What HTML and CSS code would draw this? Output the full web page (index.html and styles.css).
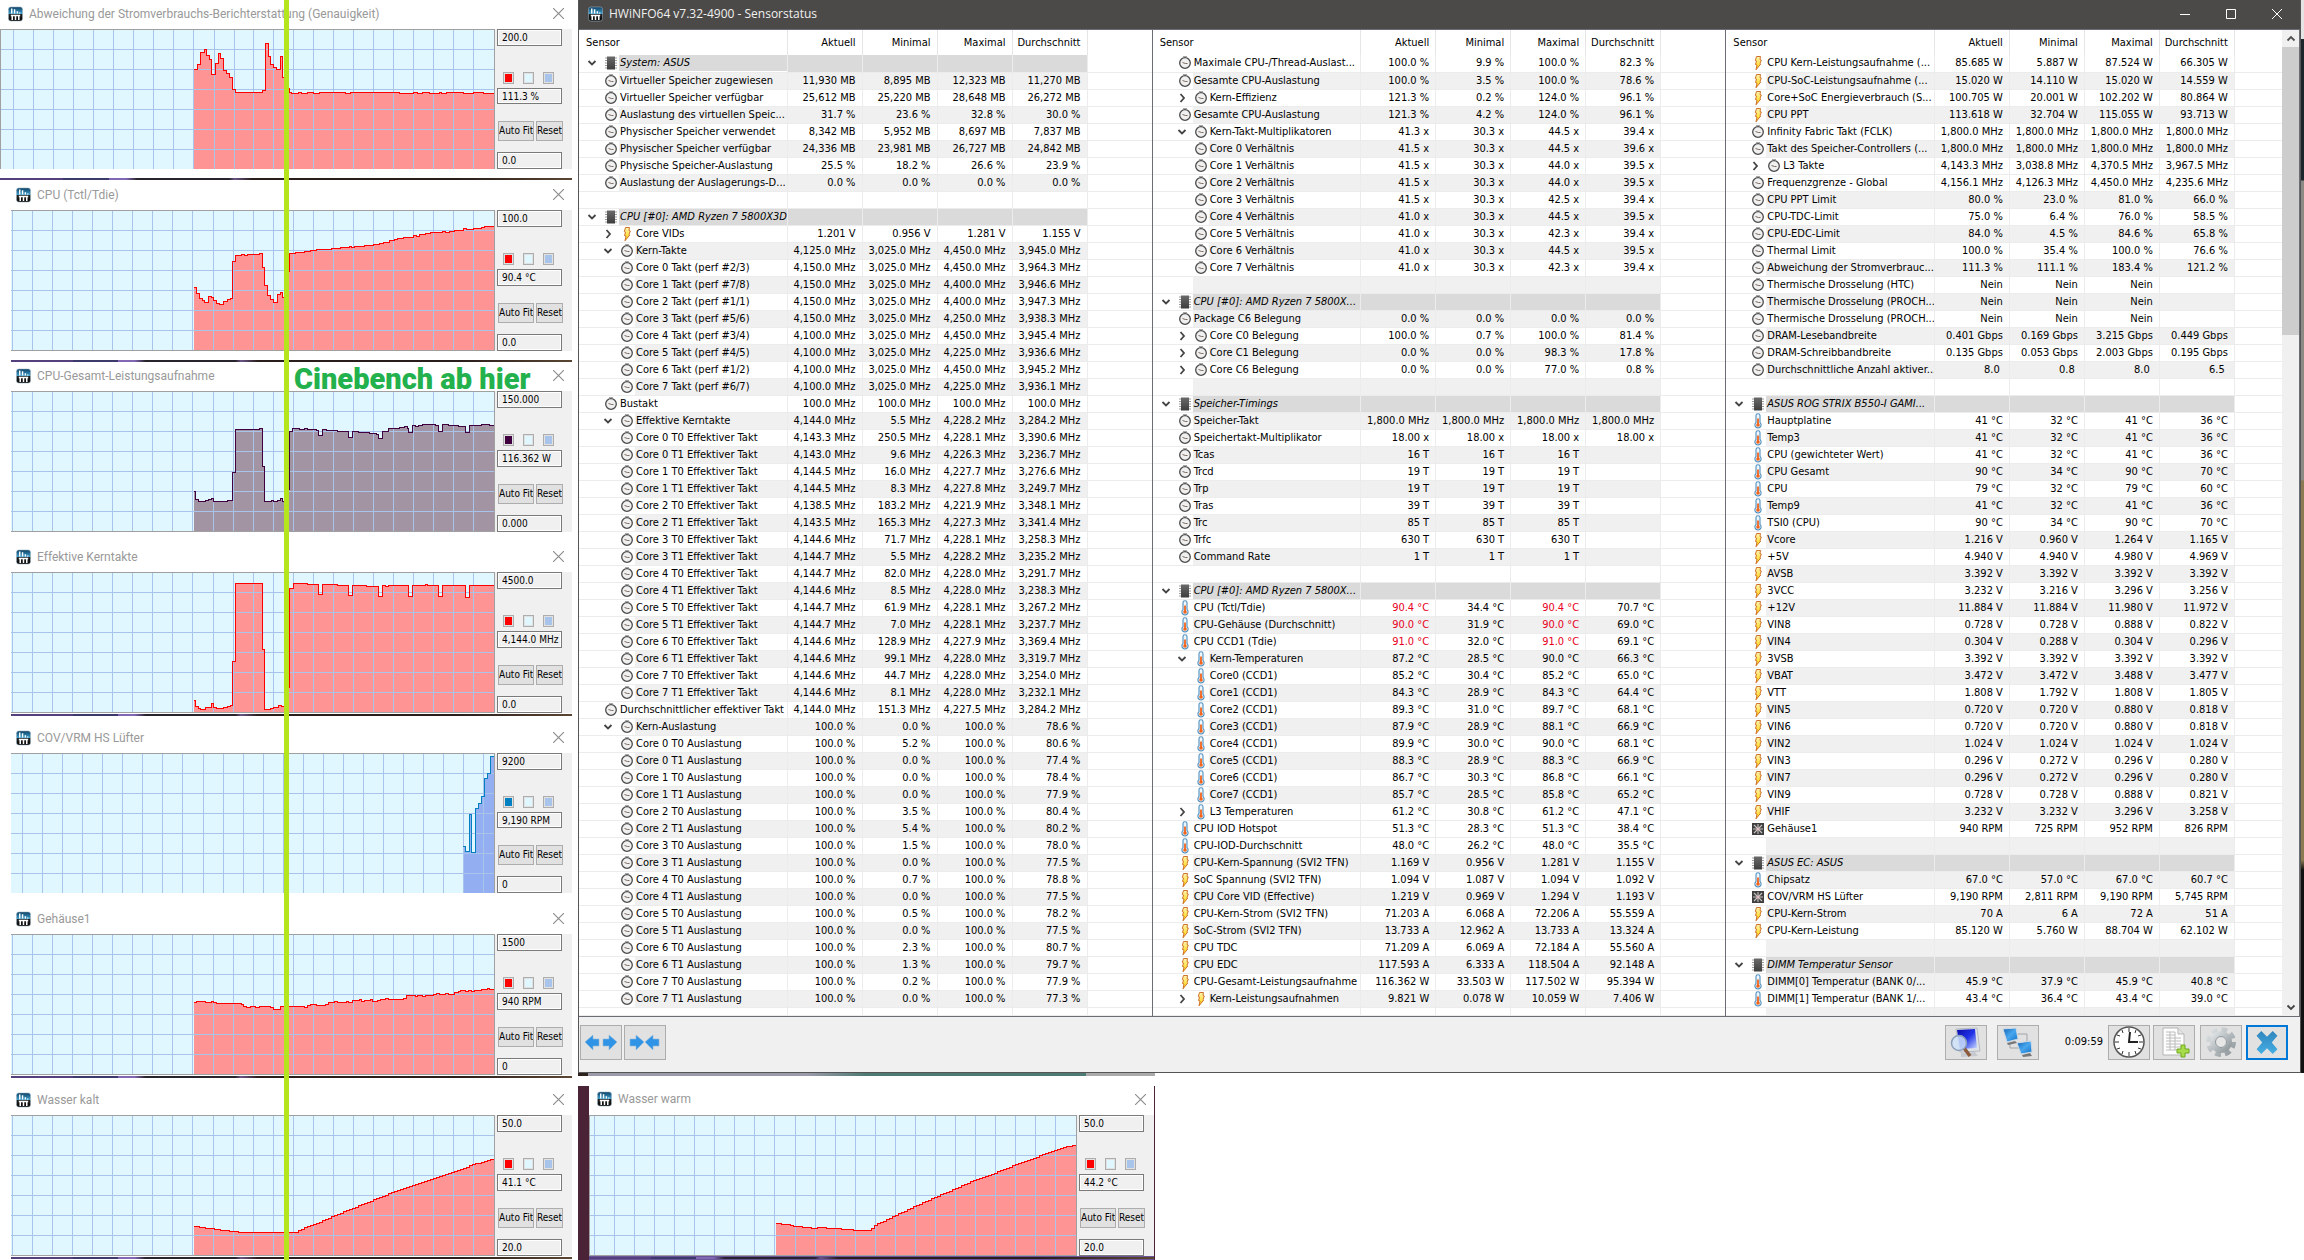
FILE: index.html
```html
<!DOCTYPE html>
<html lang="de">
<head>
<meta charset="utf-8">
<title>HWiNFO64 - Sensorstatus</title>
<link rel="stylesheet" href="styles.css">
</head>
<body>
<svg class="defs" aria-hidden="true">
  <defs>
    <linearGradient id="g-app" x1="0" y1="0" x2="0" y2="1"><stop offset="0" stop-color="#0d3f63"/><stop offset=".48" stop-color="#3f9fce"/><stop offset=".5" stop-color="#222"/><stop offset="1" stop-color="#050505"/></linearGradient>
    <linearGradient id="g-bolt" x1="0" y1="0" x2="0" y2="1"><stop offset="0" stop-color="#fff3b0"/><stop offset="1" stop-color="#ffd400"/></linearGradient>
    <linearGradient id="g-screen" x1="0" y1="0" x2="1" y2="1"><stop offset="0" stop-color="#0a0aa8"/><stop offset=".5" stop-color="#2233e8"/><stop offset="1" stop-color="#cfe0ff"/></linearGradient>
    <linearGradient id="g-pc" x1="0" y1="0" x2="1" y2="1"><stop offset="0" stop-color="#0f62b5"/><stop offset=".5" stop-color="#49a7ee"/><stop offset="1" stop-color="#1170c8"/></linearGradient>
    <linearGradient id="g-x" x1="0" y1="0" x2="0" y2="1"><stop offset="0" stop-color="#2f86bd"/><stop offset="1" stop-color="#45aee3"/></linearGradient>
    <linearGradient id="g-gear" x1="0" y1="0" x2="1" y2="1"><stop offset="0" stop-color="#dfe4e6"/><stop offset="1" stop-color="#8f979b"/></linearGradient>
    <linearGradient id="g-chip" x1="0" y1="0" x2="0" y2="1"><stop offset="0" stop-color="#6a6a6a"/><stop offset="1" stop-color="#3e3e3e"/></linearGradient>
  </defs>
  <symbol id="i-app" viewBox="0 0 16 16"><rect x=".5" y=".5" width="15" height="15" rx="2.5" fill="url(#g-app)" stroke="#9db4c2" stroke-width=".6"/><path d="M4 2v5.500M7 3v4.500M10 5v2.500M12.500 6.500v1" stroke="#fff" stroke-width="1.500"/><path d="M3 9.500h10M4.500 9.500v5M8 9.500v5M11.500 9.500v5" stroke="#fff" stroke-width="1.600"/></symbol>
  <symbol id="i-clock" viewBox="0 0 12 16"><circle cx="6" cy="8" r="5.300" fill="#f0f0f0" stroke="#4a4a4a" stroke-width="1.300"/><path d="M3.500 7.500 6.500 8.500h2" fill="none" stroke="#6e5a50" stroke-width=".9"/><path d="M4 1.500h4" stroke="#a8a8a8"/></symbol>
  <symbol id="i-chip" viewBox="0 0 12 16"><path d="M0 3h12M0 5.500h12M0 8h12M0 10.500h12M0 13h12" stroke="#9a9a9a"/><rect x="2" y="1.500" width="8" height="13" fill="url(#g-chip)"/></symbol>
  <symbol id="i-bolt" viewBox="0 0 12 16"><path d="M4.500 1.500H8.500L8 4.500 9.300 5 8 8.500 8.700 9 4 14.800 5 10 3.500 9.500 4.500 6 3.300 5.500Z" fill="url(#g-bolt)" stroke="#c8641c" stroke-width=".9"/></symbol>
  <symbol id="i-temp" viewBox="0 0 12 16"><path d="M4 2.500a2 1.700 0 0 1 4 0V9.500a3.100 3.100 0 1 1-4 0Z" fill="#eef7fd" stroke="#4f90bf" stroke-width="1.100"/><path d="M6 5.500v6.500" stroke="#f0641e" stroke-width="1.800"/><circle cx="6" cy="12" r="1.800" fill="#f0641e"/></symbol>
  <symbol id="i-fan" viewBox="0 0 12 16"><rect x="0" y="2" width="12" height="12" fill="#3f3f3f"/><path d="M6 3v4M6 9v4M1 8h4M7 8h4M2 4l3 3M7 9l3 3M10 4 7 7M5 9l-3 3" stroke="#c9c2c2" stroke-width="1.100"/><circle cx="6" cy="8" r="1.300" fill="#e7b9c0"/></symbol>
  <symbol id="i-open" viewBox="0 0 10 10"><path d="M1.500 3 5 6.500 8.500 3" fill="none" stroke="#444" stroke-width="1.800"/></symbol>
  <symbol id="i-shut" viewBox="0 0 10 10"><path d="M3.500 1 7 5 3.500 9" fill="none" stroke="#444" stroke-width="1.800"/></symbol>
  <symbol id="i-up" viewBox="0 0 10 10"><path d="M1.500 7 5 3.500 8.500 7" fill="none" stroke="#505050" stroke-width="1.800"/></symbol>
  <symbol id="i-x" viewBox="0 0 10 10"><path d="M0 0 10 10M10 0 0 10" fill="none" stroke="currentColor"/></symbol>
</svg>

<div class="desktop">
  <div class="graphs" id="graphs">
    <div class="marker"></div>
    <p class="note">Cinebench ab hier</p>
  </div>

  <div class="right">
    <div class="stage">
      <section class="main-window">
        <header class="titlebar">
          <svg class="app-icon"><use href="#i-app"/></svg>
          <h1 class="title">HWiNFO64 v7.32-4900 - Sensorstatus</h1>
          <button class="sys" aria-label="Minimieren"><svg viewBox="0 0 10 10"><path d="M0 5.500h10" stroke="currentColor"/></svg></button>
          <button class="sys" aria-label="Maximieren"><svg viewBox="0 0 10 10"><path d="M.5 .5h9v9h-9Z" fill="none" stroke="currentColor"/></svg></button>
          <button class="sys" aria-label="Schließen"><svg><use href="#i-x"/></svg></button>
        </header>
        <div class="panels">
          <div class="panel"><table class="sensors" id="t1"></table></div>
          <div class="panel"><table class="sensors" id="t2"></table></div>
          <div class="panel panel-last"><table class="sensors" id="t3"></table>
            <div class="scrollbar"><svg class="arrow"><use href="#i-up"/></svg><div class="thumb"></div><svg class="arrow arrow-end"><use href="#i-open"/></svg></div>
          </div>
        </div>
        <footer class="toolbar">
          <button class="tool" aria-label="Spalten verbreitern"><svg viewBox="0 0 40 32"><path d="M4 16l8-7v4h6v7h-6v4ZM36 16l-8-7v4h-6v7h6v4Z" fill="#2f93e6" stroke="#8fb8da" stroke-width=".6"/></svg></button>
          <button class="tool" aria-label="Spalten verkleinern"><svg viewBox="0 0 40 32"><path d="M19 16l-8-7v4H5v7h6v4ZM20 16l8-7v4h6v7h-6v4Z" fill="#2f93e6" stroke="#8fb8da" stroke-width=".6"/></svg></button>
          <span class="spacer"></span>
          <button class="tool tool-search" aria-label="Sensoren suchen"><svg viewBox="0 0 40 32"><path d="M10 3l21-1 3 23-20 1Z" fill="#dfe3e8" stroke="#b5bac0"/><path d="M11 4l18-1 2 19-17 1Z" fill="url(#g-screen)"/><path d="M15 27l14-1 3 4-17 1Z" fill="#c6cad0"/><path d="M18 22l6 8" stroke="#8c5a3c" stroke-width="3.500"/><circle cx="13" cy="17" r="7.500" fill="#cfe3f8" fill-opacity=".85" stroke="#8ba0b8" stroke-width="1.500"/></svg></button>
          <button class="tool tool-net" aria-label="Remote"><svg viewBox="0 0 40 32"><path d="M20 8h9v8M12 17v5h9" fill="none" stroke="#a0a4a8"/><path d="M5 3l13-1 2 11-11 3Z" fill="url(#g-pc)" stroke="#cdd9e4"/><path d="M9 17l8-2 2 2-9 2Z" fill="#777"/><path d="M19 17l14-2 1 11-11 2Z" fill="url(#g-pc)" stroke="#cdd9e4"/><path d="M24 29l8-2 2 3-9 1Z" fill="#777"/></svg></button>
          <time class="elapsed">0:09:59</time>
          <button class="tool" aria-label="Zeit zurücksetzen"><svg viewBox="0 0 40 32"><circle cx="20" cy="16" r="15" fill="#fff" stroke="#555" stroke-width="1.500"/><path d="M20 2v4M20 26v4M6 16h4M30 16h4M13 4l1 3M27 4l-1 3M13 28l1-3M27 28l-1-3M8 9l3 1M32 9l-3 1M8 23l3-1M32 23l-3-1" stroke="#333"/><path d="M21 6l-1 10h9" fill="none" stroke="#222" stroke-width="2"/></svg></button>
          <button class="tool tool-log" aria-label="Protokoll starten"><svg viewBox="0 0 40 32"><path d="M9 2h15l6 6v21H9Z" fill="#fdfdfd" stroke="#b5b5b5"/><path d="M24 2v6h6" fill="#e6e6e6" stroke="#b5b5b5"/><path d="M12 6h9M12 9h9M12 12h15M12 15h15M12 18h15M12 21h15M12 24h12M16 6v18M21 6v18" stroke="#bcbcbc"/><path d="M27 19h4v4h4v4h-4v4h-4v-4h-4v-4h4Z" fill="#a8dc4a" stroke="#6fa81e"/></svg></button>
          <button class="tool tool-gear" aria-label="Einstellungen"><svg viewBox="0 0 40 32"><circle cx="20" cy="16" r="12.500" fill="none" stroke="url(#g-gear)" stroke-width="5" stroke-dasharray="5.800 4"/><circle cx="20" cy="16" r="8.500" fill="#d5dadc" stroke="url(#g-gear)" stroke-width="5"/><circle cx="20" cy="16" r="5.500" fill="#e6e6e6" stroke="#8f979b"/></svg></button>
          <button class="tool tool-close" aria-label="Schließen"><svg viewBox="0 0 40 32"><path d="M9 9l5-5 6 6 6-6 5 5-6 7 6 7-5 5-6-6-6 6-5-5 6-7Z" fill="url(#g-x)"/></svg></button>
        </footer>
      </section>
      <div class="backdrop-edge"></div>
    </div>
    <div class="under-strip"></div>
    <div class="warm-slot" id="warm"></div>
  </div>
</div>
<script src="app.js"></script>
</body>
</html>
```
FILE: styles.css
```css
* { box-sizing: border-box; }

body {
  margin: 0;
  background: #fff;
  color: #000;
  font: 11px/16px "DejaVu Sans Condensed", "DejaVu Sans", "Noto Sans", sans-serif;
}

button, input { font: inherit; color: inherit; margin: 0; padding: 0; border-radius: 0; }

.defs { position: absolute; width: 0; height: 0; }

.desktop {
  display: grid;
  grid-template-columns: minmax(0, 578fr) minmax(0, 1726fr);
  height: 100vh;
  min-height: 1260px;
  overflow: hidden;
}

/* graph windows */
.graphs { position: relative; padding-right: 6px; }

.graph { margin-left: 11px; height: 181px; background: #fff; }
.graph-wide { margin-left: 0; }

.graph-title { display: flex; align-items: center; height: 29px; padding: 0 8px 2px 5px; gap: 6px; }
.graph-wide .graph-title, .warm-slot .graph-title { padding-left: 8px; }
.graph-title h2 { flex: 1; margin: 0; font: 12px/16px Roboto, "Noto Sans", sans-serif; color: #999; white-space: nowrap; }

.app-icon { width: 15px; height: 16px; flex: none; }
.close { width: 11px; height: 11px; border: 0; background: none; color: #8a8a8a; display: flex; }
.close svg { width: 11px; height: 11px; }

.graph-body { display: flex; height: 141px; background: #f0f0f0; overflow: hidden; }
.clipped .graph-body { height: 140px; }
.plot { flex: 1; min-width: 0; width: 0; height: 141px; border: solid #a0a0a0; border-width: 1px 1px 1px 0; background: #e0f7ff; shape-rendering: crispEdges; }
.graph-wide .plot, .warm-slot .plot { border-left-width: 1px; }
.grid-lines { stroke: #a9c4ea; fill: none; vector-effect: non-scaling-stroke; }
.trace { fill: none; vector-effect: non-scaling-stroke; }

.side { display: flex; flex-direction: column; width: 77px; padding: 0 9px 0 2px; font-size: 10px; }
.field { width: 65px; height: 17px; padding: 0 0 0 4px; border: 1px solid #7a7a7a; background: #f0f0f0; box-shadow: inset 0 0 0 1px #fff; }
.swatches { display: flex; gap: 9px; margin: 26px 0 4px 6px; }
.swatch { width: 11px; height: 12px; border: 1px solid #adadad; outline: 1px solid #e1e1e1; outline-offset: -2px; }
.swatch-back { background: #e0f7ff; }
.swatch-grid { background: #a9c4ea; }
.actions { display: flex; gap: 2px; margin: 17px 0 11px 1px; }
.action { height: 20px; border: 1px solid #adadad; background: #e1e1e1; overflow: hidden; white-space: nowrap; }
.action-fit { width: 36px; flex: none; }
.action-reset { width: 27px; flex: none; }

.gap { display: flex; flex-direction: column; height: 11px; padding: 1px 0; }
.gap::before { content: ""; height: 2px; }
.gap-low { justify-content: flex-end; padding-bottom: 0; }
.gap-low::before, .gap-high::before {
  background: linear-gradient(90deg, #54407c 0 11%, #3c3a6a 11% 19%, #8268b4 19% 22%, #28242c 24% 40%, #6a5486 41%, #2a1e1c 44% 80%, #5a4632);
}

.marker { position: absolute; z-index: 2; top: 0; bottom: 0; left: 284px; width: 5px; background: #b5e61d; }
.note {
  position: absolute; z-index: 2; left: 294px; top: 361px; margin: 0;
  font: 900 29px/36px Roboto, "Open Sans", sans-serif;
  color: #22b14c; white-space: nowrap;
}

/* main sensor window */
.right { display: flex; flex-direction: column; min-width: 0; }
.stage { display: flex; }
.main-window { flex: 1; min-width: 0; border: solid #555; border-width: 0 1px 1px; background: #f0f0f0; }
.backdrop-edge { width: 3px; background: linear-gradient(#e4e4e4 0 39px, #1c262b 39px 180px, #8d8a86 181px 480px, #8c7a52 481px 860px, #111 870px); }

.titlebar { display: flex; align-items: center; height: 29px; padding: 0 0 2px 9px; background: #4c4a48; color: #f0f0f0; }
.title { flex: 1; margin: 0 0 0 6px; font: 12px/16px "Open Sans", "Noto Sans", sans-serif; }
.sys { width: 46px; height: 27px; border: 0; background: none; color: #fff; }
.sys svg { display: block; width: 10px; height: 10px; margin: 0 auto; }

.panels { display: flex; }
.panel { flex: 1; min-width: 0; border: solid #6a6d73; border-width: 1px 1px 1px 0; background: #fff; }
.panel-last { display: flex; }

.sensors { width: 100%; table-layout: fixed; border-collapse: collapse; }
.panel-last .sensors { flex: 1; }
.sensors th, .sensors td { padding: 0; font-weight: normal; text-align: right; white-space: nowrap; overflow: hidden; }
.sensors thead th { height: 25px; padding-right: 6px; border-right: 1px solid #e5e5e5; }
.sensors thead th:first-child { text-align: left; padding-left: 7px; }
.sensors thead th:last-child { border-right: 0; }
.sensors tbody tr { height: 17px; }
.sensors tbody td { padding-right: 6px; border: solid #ececec; border-width: 0 1px 1px 0; }
.sensors tbody th { border: solid #ececec; border-width: 0 1px 1px 0; }
.sensors tbody td:last-child { border-right: 0; background: #fff; }
.col-value { width: 75px; }
.col-name { width: 208px; }

.cell { display: flex; height: 16px; text-align: left; }
.lead { display: flex; align-items: center; justify-content: flex-end; flex: none; width: 40px; padding-right: 2px; gap: 8px; background: #fff; }
.lead-2 { width: 56px; }
.lead svg { width: 12px; height: 16px; flex: none; }
.lead .chev { width: 10px; height: 10px; }
.name { flex: 1; padding-left: 1px; overflow: hidden; }
.stripe td, .stripe .name { background: #f0f0f0; }
.stripe td, .stripe th { border-right-color: #f8f8f8; }
.group td, .group .name { background: #dadada; }
.group .name { font-style: italic; }
.sensors tbody tr.rest { height: 8px; }
.rest .cell { height: 7px; }
.hot { color: #e8001c; }

.scrollbar { display: flex; flex-direction: column; align-items: center; width: 17px; background: #f0f0f0; }
.arrow { width: 10px; height: 17px; flex: none; }
.thumb { width: 100%; height: 288px; background: #cdcdcd; }
.arrow-end { margin-top: auto; }

.toolbar { display: flex; align-items: center; height: 55px; padding: 0 12px 4px 1px; gap: 2px; }
.tool { width: 42px; height: 35px; border: 1px solid #adadad; background: #e1e1e1; display: flex; align-items: center; justify-content: center; }
.tool svg { width: 40px; height: 32px; }
.spacer { flex: 1; }
.tool-net { margin-left: 8px; }
.elapsed { margin: 0 3px 0 24px; }
.tool-log { margin-left: 1px; }
.tool-gear { margin-left: 3px; }
.tool-close { margin-left: 2px; border: 2px solid #0078d7; }
.tool-close svg { width: 38px; height: 31px; }

.under-strip { width: 577px; height: 3px; margin-bottom: 10px; background: linear-gradient(90deg, #2c211c 0 10px, #9a9aa8 10px 40%, #4d7a72 50% 88%, #aaa 88%); }
.warm-slot { flex: 1; width: 577px; padding: 0 1px 0 11px; background: #4a2336; }
.warm-slot .graph { margin-left: 0; height: auto; }
.warm-slot .gap { height: 4px; padding: 1px 0 0; background: #6a559a; }
```
FILE: app.js
```javascript
/* Each line: icon, indent level, tree state, name, then four values.
   h = group, c = clock, b = voltage/power, t = temperature, f = fan, _ = empty */
const panels = [
`h1vSystem: ASUS
c1-Virtueller Speicher zugewiesen|11,930 MB|8,895 MB|12,323 MB|11,270 MB
c1-Virtueller Speicher verfügbar|25,612 MB|25,220 MB|28,648 MB|26,272 MB
c1-Auslastung des virtuellen Speic...|31.7 %|23.6 %|32.8 %|30.0 %
c1-Physischer Speicher verwendet|8,342 MB|5,952 MB|8,697 MB|7,837 MB
c1-Physischer Speicher verfügbar|24,336 MB|23,981 MB|26,727 MB|24,842 MB
c1-Physische Speicher-Auslastung|25.5 %|18.2 %|26.6 %|23.9 %
c1-Auslastung der Auslagerungs-D...|0.0 %|0.0 %|0.0 %|0.0 %
_1-
h1vCPU [#0]: AMD Ryzen 7 5800X3D
b2>Core VIDs|1.201 V|0.956 V|1.281 V|1.155 V
c2vKern-Takte|4,125.0 MHz|3,025.0 MHz|4,450.0 MHz|3,945.0 MHz
c2-Core 0 Takt (perf #2/3)|4,150.0 MHz|3,025.0 MHz|4,450.0 MHz|3,964.3 MHz
c2-Core 1 Takt (perf #7/8)|4,150.0 MHz|3,025.0 MHz|4,400.0 MHz|3,946.6 MHz
c2-Core 2 Takt (perf #1/1)|4,150.0 MHz|3,025.0 MHz|4,400.0 MHz|3,947.3 MHz
c2-Core 3 Takt (perf #5/6)|4,150.0 MHz|3,025.0 MHz|4,250.0 MHz|3,938.3 MHz
c2-Core 4 Takt (perf #3/4)|4,100.0 MHz|3,025.0 MHz|4,450.0 MHz|3,945.4 MHz
c2-Core 5 Takt (perf #4/5)|4,100.0 MHz|3,025.0 MHz|4,225.0 MHz|3,936.6 MHz
c2-Core 6 Takt (perf #1/2)|4,100.0 MHz|3,025.0 MHz|4,450.0 MHz|3,945.2 MHz
c2-Core 7 Takt (perf #6/7)|4,100.0 MHz|3,025.0 MHz|4,225.0 MHz|3,936.1 MHz
c1-Bustakt|100.0 MHz|100.0 MHz|100.0 MHz|100.0 MHz
c2vEffektive Kerntakte|4,144.0 MHz|5.5 MHz|4,228.2 MHz|3,284.2 MHz
c2-Core 0 T0 Effektiver Takt|4,143.3 MHz|250.5 MHz|4,228.1 MHz|3,390.6 MHz
c2-Core 0 T1 Effektiver Takt|4,143.0 MHz|9.6 MHz|4,226.3 MHz|3,236.7 MHz
c2-Core 1 T0 Effektiver Takt|4,144.5 MHz|16.0 MHz|4,227.7 MHz|3,276.6 MHz
c2-Core 1 T1 Effektiver Takt|4,144.5 MHz|8.3 MHz|4,227.8 MHz|3,249.7 MHz
c2-Core 2 T0 Effektiver Takt|4,138.5 MHz|183.2 MHz|4,221.9 MHz|3,348.1 MHz
c2-Core 2 T1 Effektiver Takt|4,143.5 MHz|165.3 MHz|4,227.3 MHz|3,341.4 MHz
c2-Core 3 T0 Effektiver Takt|4,144.6 MHz|71.7 MHz|4,228.1 MHz|3,258.3 MHz
c2-Core 3 T1 Effektiver Takt|4,144.7 MHz|5.5 MHz|4,228.2 MHz|3,235.2 MHz
c2-Core 4 T0 Effektiver Takt|4,144.7 MHz|82.0 MHz|4,228.0 MHz|3,291.7 MHz
c2-Core 4 T1 Effektiver Takt|4,144.6 MHz|8.5 MHz|4,228.0 MHz|3,238.3 MHz
c2-Core 5 T0 Effektiver Takt|4,144.7 MHz|61.9 MHz|4,228.1 MHz|3,267.2 MHz
c2-Core 5 T1 Effektiver Takt|4,144.7 MHz|7.0 MHz|4,228.1 MHz|3,237.7 MHz
c2-Core 6 T0 Effektiver Takt|4,144.6 MHz|128.9 MHz|4,227.9 MHz|3,369.4 MHz
c2-Core 6 T1 Effektiver Takt|4,144.6 MHz|99.1 MHz|4,228.0 MHz|3,319.7 MHz
c2-Core 7 T0 Effektiver Takt|4,144.6 MHz|44.7 MHz|4,228.0 MHz|3,254.0 MHz
c2-Core 7 T1 Effektiver Takt|4,144.6 MHz|8.1 MHz|4,228.0 MHz|3,232.1 MHz
c1-Durchschnittlicher effektiver Takt|4,144.0 MHz|151.3 MHz|4,227.5 MHz|3,284.2 MHz
c2vKern-Auslastung|100.0 %|0.0 %|100.0 %|78.6 %
c2-Core 0 T0 Auslastung|100.0 %|5.2 %|100.0 %|80.6 %
c2-Core 0 T1 Auslastung|100.0 %|0.0 %|100.0 %|77.4 %
c2-Core 1 T0 Auslastung|100.0 %|0.0 %|100.0 %|78.4 %
c2-Core 1 T1 Auslastung|100.0 %|0.0 %|100.0 %|77.9 %
c2-Core 2 T0 Auslastung|100.0 %|3.5 %|100.0 %|80.4 %
c2-Core 2 T1 Auslastung|100.0 %|5.4 %|100.0 %|80.2 %
c2-Core 3 T0 Auslastung|100.0 %|1.5 %|100.0 %|78.0 %
c2-Core 3 T1 Auslastung|100.0 %|0.0 %|100.0 %|77.5 %
c2-Core 4 T0 Auslastung|100.0 %|0.7 %|100.0 %|78.8 %
c2-Core 4 T1 Auslastung|100.0 %|0.0 %|100.0 %|77.5 %
c2-Core 5 T0 Auslastung|100.0 %|0.5 %|100.0 %|78.2 %
c2-Core 5 T1 Auslastung|100.0 %|0.0 %|100.0 %|77.5 %
c2-Core 6 T0 Auslastung|100.0 %|2.3 %|100.0 %|80.7 %
c2-Core 6 T1 Auslastung|100.0 %|1.3 %|100.0 %|79.7 %
c2-Core 7 T0 Auslastung|100.0 %|0.2 %|100.0 %|77.9 %
c2-Core 7 T1 Auslastung|100.0 %|0.0 %|100.0 %|77.3 %`,
`c1-Maximale CPU-/Thread-Auslast...|100.0 %|9.9 %|100.0 %|82.3 %
c1-Gesamte CPU-Auslastung|100.0 %|3.5 %|100.0 %|78.6 %
c2>Kern-Effizienz|121.3 %|0.2 %|124.0 %|96.1 %
c1-Gesamte CPU-Auslastung|121.3 %|4.2 %|124.0 %|96.1 %
c2vKern-Takt-Multiplikatoren|41.3 x|30.3 x|44.5 x|39.4 x
c2-Core 0 Verhältnis|41.5 x|30.3 x|44.5 x|39.6 x
c2-Core 1 Verhältnis|41.5 x|30.3 x|44.0 x|39.5 x
c2-Core 2 Verhältnis|41.5 x|30.3 x|44.0 x|39.5 x
c2-Core 3 Verhältnis|41.5 x|30.3 x|42.5 x|39.4 x
c2-Core 4 Verhältnis|41.0 x|30.3 x|44.5 x|39.5 x
c2-Core 5 Verhältnis|41.0 x|30.3 x|42.3 x|39.4 x
c2-Core 6 Verhältnis|41.0 x|30.3 x|44.5 x|39.5 x
c2-Core 7 Verhältnis|41.0 x|30.3 x|42.3 x|39.4 x
_1-
h1vCPU [#0]: AMD Ryzen 7 5800X...
c1-Package C6 Belegung|0.0 %|0.0 %|0.0 %|0.0 %
c2>Core C0 Belegung|100.0 %|0.7 %|100.0 %|81.4 %
c2>Core C1 Belegung|0.0 %|0.0 %|98.3 %|17.8 %
c2>Core C6 Belegung|0.0 %|0.0 %|77.0 %|0.8 %
_1-
h1vSpeicher-Timings
c1-Speicher-Takt|1,800.0 MHz|1,800.0 MHz|1,800.0 MHz|1,800.0 MHz
c1-Speichertakt-Multiplikator|18.00 x|18.00 x|18.00 x|18.00 x
c1-Tcas|16 T|16 T|16 T|
c1-Trcd|19 T|19 T|19 T|
c1-Trp|19 T|19 T|19 T|
c1-Tras|39 T|39 T|39 T|
c1-Trc|85 T|85 T|85 T|
c1-Trfc|630 T|630 T|630 T|
c1-Command Rate|1 T|1 T|1 T|
_1-
h1vCPU [#0]: AMD Ryzen 7 5800X...
t1-CPU (Tctl/Tdie)|!90.4 °C|34.4 °C|!90.4 °C|70.7 °C
t1-CPU-Gehäuse (Durchschnitt)|!90.0 °C|31.9 °C|!90.0 °C|69.0 °C
t1-CPU CCD1 (Tdie)|!91.0 °C|32.0 °C|!91.0 °C|69.1 °C
t2vKern-Temperaturen|87.2 °C|28.5 °C|90.0 °C|66.3 °C
t2-Core0 (CCD1)|85.2 °C|30.4 °C|85.2 °C|65.0 °C
t2-Core1 (CCD1)|84.3 °C|28.9 °C|84.3 °C|64.4 °C
t2-Core2 (CCD1)|89.3 °C|31.0 °C|89.7 °C|68.1 °C
t2-Core3 (CCD1)|87.9 °C|28.9 °C|88.1 °C|66.9 °C
t2-Core4 (CCD1)|89.9 °C|30.0 °C|90.0 °C|68.1 °C
t2-Core5 (CCD1)|88.3 °C|28.9 °C|88.3 °C|66.9 °C
t2-Core6 (CCD1)|86.7 °C|30.3 °C|86.8 °C|66.1 °C
t2-Core7 (CCD1)|85.7 °C|28.5 °C|85.8 °C|65.2 °C
t2>L3 Temperaturen|61.2 °C|30.8 °C|61.2 °C|47.1 °C
t1-CPU IOD Hotspot|51.3 °C|28.3 °C|51.3 °C|38.4 °C
t1-CPU-IOD-Durchschnitt|48.0 °C|26.2 °C|48.0 °C|35.5 °C
b1-CPU-Kern-Spannung (SVI2 TFN)|1.169 V|0.956 V|1.281 V|1.155 V
b1-SoC Spannung (SVI2 TFN)|1.094 V|1.087 V|1.094 V|1.092 V
b1-CPU Core VID (Effective)|1.219 V|0.969 V|1.294 V|1.193 V
b1-CPU-Kern-Strom (SVI2 TFN)|71.203 A|6.068 A|72.206 A|55.559 A
b1-SoC-Strom (SVI2 TFN)|13.733 A|12.962 A|13.733 A|13.324 A
b1-CPU TDC|71.209 A|6.069 A|72.184 A|55.560 A
b1-CPU EDC|117.593 A|6.333 A|118.504 A|92.148 A
b1-CPU-Gesamt-Leistungsaufnahme|116.362 W|33.503 W|117.502 W|95.394 W
b2>Kern-Leistungsaufnahmen|9.821 W|0.078 W|10.059 W|7.406 W`,
`b1-CPU Kern-Leistungsaufnahme (...|85.685 W|5.887 W|87.524 W|66.305 W
b1-CPU-SoC-Leistungsaufnahme (...|15.020 W|14.110 W|15.020 W|14.559 W
b1-Core+SoC Energieverbrauch (S...|100.705 W|20.001 W|102.202 W|80.864 W
b1-CPU PPT|113.618 W|32.704 W|115.055 W|93.713 W
c1-Infinity Fabric Takt (FCLK)|1,800.0 MHz|1,800.0 MHz|1,800.0 MHz|1,800.0 MHz
c1-Takt des Speicher-Controllers (...|1,800.0 MHz|1,800.0 MHz|1,800.0 MHz|1,800.0 MHz
c2>L3 Takte|4,143.3 MHz|3,038.8 MHz|4,370.5 MHz|3,967.5 MHz
c1-Frequenzgrenze - Global|4,156.1 MHz|4,126.3 MHz|4,450.0 MHz|4,235.6 MHz
c1-CPU PPT Limit|80.0 %|23.0 %|81.0 %|66.0 %
c1-CPU-TDC-Limit|75.0 %|6.4 %|76.0 %|58.5 %
c1-CPU-EDC-Limit|84.0 %|4.5 %|84.6 %|65.8 %
c1-Thermal Limit|100.0 %|35.4 %|100.0 %|76.6 %
c1-Abweichung der Stromverbrauc...|111.3 %|111.1 %|183.4 %|121.2 %
c1-Thermische Drosselung (HTC)|Nein|Nein|Nein|
c1-Thermische Drosselung (PROCH...|Nein|Nein|Nein|
c1-Thermische Drosselung (PROCH...|Nein|Nein|Nein|
c1-DRAM-Lesebandbreite|0.401 Gbps|0.169 Gbps|3.215 Gbps|0.449 Gbps
c1-DRAM-Schreibbandbreite|0.135 Gbps|0.053 Gbps|2.003 Gbps|0.195 Gbps
c1-Durchschnittliche Anzahl aktiver...|8.0&nbsp;|0.8&nbsp;|8.0&nbsp;|6.5&nbsp;
_1-
h1vASUS ROG STRIX B550-I GAMI...
t1-Hauptplatine|41 °C|32 °C|41 °C|36 °C
t1-Temp3|41 °C|32 °C|41 °C|36 °C
t1-CPU (gewichteter Wert)|41 °C|32 °C|41 °C|36 °C
t1-CPU Gesamt|90 °C|34 °C|90 °C|70 °C
t1-CPU|79 °C|32 °C|79 °C|60 °C
t1-Temp9|41 °C|32 °C|41 °C|36 °C
t1-TSI0 (CPU)|90 °C|34 °C|90 °C|70 °C
b1-Vcore|1.216 V|0.960 V|1.264 V|1.165 V
b1-+5V|4.940 V|4.940 V|4.980 V|4.969 V
b1-AVSB|3.392 V|3.392 V|3.392 V|3.392 V
b1-3VCC|3.232 V|3.216 V|3.296 V|3.256 V
b1-+12V|11.884 V|11.884 V|11.980 V|11.972 V
b1-VIN8|0.728 V|0.728 V|0.888 V|0.822 V
b1-VIN4|0.304 V|0.288 V|0.304 V|0.296 V
b1-3VSB|3.392 V|3.392 V|3.392 V|3.392 V
b1-VBAT|3.472 V|3.472 V|3.488 V|3.477 V
b1-VTT|1.808 V|1.792 V|1.808 V|1.805 V
b1-VIN5|0.720 V|0.720 V|0.880 V|0.818 V
b1-VIN6|0.720 V|0.720 V|0.880 V|0.818 V
b1-VIN2|1.024 V|1.024 V|1.024 V|1.024 V
b1-VIN3|0.296 V|0.272 V|0.296 V|0.280 V
b1-VIN7|0.296 V|0.272 V|0.296 V|0.280 V
b1-VIN9|0.728 V|0.728 V|0.888 V|0.821 V
b1-VHIF|3.232 V|3.232 V|3.296 V|3.258 V
f1-Gehäuse1|940 RPM|725 RPM|952 RPM|826 RPM
_1-
h1vASUS EC: ASUS
t1-Chipsatz|67.0 °C|57.0 °C|67.0 °C|60.7 °C
f1-COV/VRM HS Lüfter|9,190 RPM|2,811 RPM|9,190 RPM|5,745 RPM
b1-CPU-Kern-Strom|70 A|6 A|72 A|51 A
b1-CPU-Kern-Leistung|85.120 W|5.760 W|88.704 W|62.102 W
_1-
h1vDIMM Temperatur Sensor
t1-DIMM[0] Temperatur (BANK 0/...|45.9 °C|37.9 °C|45.9 °C|40.8 °C
t1-DIMM[1] Temperatur (BANK 1/...|43.4 °C|36.4 °C|43.4 °C|39.0 °C`
];

const icons = { h: 'chip', c: 'clock', b: 'bolt', t: 'temp', f: 'fan' };
const use = (id, cls = '') => `<svg class="${cls}"><use href="#i-${id}"/></svg>`;

panels.forEach((text, p) => {
  let n = 0;
  const rows = text.split('\n').map(line => {
    const [icon, level, state] = line;
    const [name, ...values] = line.slice(3).split('|');
    const cls = icon === 'h' ? 'group' : n % 2 ? 'stripe' : '';
    n += name === 'L3 Takte' ? 2 : 1;
    const chev = state === 'v' ? use('open', 'chev') : state === '>' ? use('shut', 'chev') : '';
    const lead = `<span class="lead lead-${level}">${chev}${icons[icon] ? use(icons[icon]) : ''}</span>`;
    const cells = [0, 1, 2, 3].map(i => {
      const v = values[i] || '';
      return v[0] === '!' ? `<td class="hot">${v.slice(1)}</td>` : `<td>${v}</td>`;
    }).join('');
    return `<tr class="${cls}"><th scope="row"><div class="cell">${lead}<span class="name">${name}</span></div></th>${cells}<td></td></tr>`;
  });
  if (p === 1) {
    const at = rows.findIndex(r => r.includes('CPU IOD Hotspot'));
    rows[at] = rows[at].replace('class="stripe"', 'class=""');
  }
  const rest = `<tr class="rest ${p === 2 ? 'stripe' : ''}"><th><div class="cell"><span class="lead"></span><span class="name"></span></div></th>${'<td></td>'.repeat(5)}</tr>`;
  document.getElementById('t' + (p + 1)).innerHTML =
    `<colgroup><col class="col-name">${'<col class="col-value">'.repeat(4)}<col></colgroup>
     <thead><tr><th>Sensor</th><th>Aktuell</th><th>Minimal</th><th>Maximal</th><th>Durchschnitt</th><th></th></tr></thead>
     <tbody>${rows.join('')}${rest}</tbody>`;
});

/* History graphs: "x,y" pairs, the level y holds from x until the next pair.
   smooth graphs are sampled every 3 units between their pairs. */
const RED = ['#ff0000', '#ff9494'];
const graphs = [
  { title: 'Abweichung der Stromverbrauchs-Berichterstattung (Genauigkeit)', max: '200.0', now: '111.3 %', min: '0.0', color: RED, wide: true, clipped: true, gap: 'gap-low',
    data: '194,39 197,34 200,22 204,19 206,25 209,29 211,44 215,33 218,23 220,28 223,40 226,43 229,47 232,59 235,62 263,60 266,13 269,26 271,34 274,37 277,39 281,26 283,47 289,58 290,62 292,63 299,62 302,63 308,62 314,63 320,62 346,63 351,62 400,63 414,62 418,63 423,62 430,63 440,62 442,63 447,62 464,63 474,62 484,63' },
  { title: 'CPU (Tctl/Tdie)', max: '100.0', now: '90.4 °C', min: '0.0', color: RED, gap: 'gap-low',
    data: '194,76 197,82 200,87 203,89 205,91 209,85 212,86 214,89 217,92 220,93 224,90 228,88 231,87 233,50 236,44 242,43 245,44 248,43 260,42 263,56 265,74 268,84 271,88 274,91 278,83 281,81 283,86 289,60 290,42 296,41 305,40 311,39 317,38 332,37 341,36 350,35 352,36 355,35 365,34 374,33 380,32 384,31 390,29 395,28 398,27 404,26 414,24 417,25 420,23 426,22 431,21 443,20 446,21 450,20 455,19 464,17 467,18 474,17 482,16 485,15' },
  { title: 'CPU-Gesamt-Leistungsaufnahme', max: '150.000', now: '116.362 W', min: '0.000', color: ['#400040', '#a394a3'], gap: '',
    data: '194,99 196,107 199,109 206,108 209,107 212,106 214,109 228,108 233,80 236,37 260,36 263,74 265,109 272,108 274,109 278,108 281,106 283,109 289,97 290,39 293,36 300,37 305,36 308,37 317,38 319,43 323,37 327,38 338,39 349,45 353,39 359,40 370,41 377,42 379,46 383,39 389,36 400,35 405,34 408,36 409,40 413,33 416,34 419,33 423,32 436,33 439,39 443,32 449,33 459,34 466,40 470,33 482,32 490,33' },
  { title: 'Effektive Kerntakte', max: '4500.0', now: '4,144.0 MHz', min: '0.0', color: RED, gap: 'gap-high',
    data: '194,127 196,133 199,135 201,136 206,134 212,130 214,134 217,135 224,134 228,133 231,132 233,88 236,10 263,76 265,136 271,135 274,134 279,132 282,133 289,114 290,15 294,10 308,11 319,21 323,11 338,12 349,22 353,12 367,13 379,23 383,12 386,13 389,12 409,23 413,12 426,11 428,12 439,23 443,12 466,24 470,12' },
  { title: 'COV/VRM HS Lüfter', max: '9200', now: '9,190 RPM', min: '0', color: ['#0080c0', '#94aef2'], clipped: true, gap: '', grid: 23,
    data: '464,92 466,97 470,60 472,98 476,54 479,49 482,42 485,24 488,19 491,2' },
  { title: 'Gehäuse1', max: '1500', now: '940 RPM', min: '0', color: RED, gap: 'gap-high',
    data: '194,67 197,66 206,67 212,66 214,67 217,68 242,69 244,71 247,72 251,71 256,72 260,71 271,72 274,74 281,71 305,72 308,70 311,69 317,70 326,69 329,67 335,66 338,67 347,66 349,67 353,65 360,64 362,66 365,65 371,64 373,66 378,65 381,64 386,63 389,64 404,63 407,60 416,61 418,60 423,61 426,60 434,59 437,58 440,59 446,58 449,59 455,57 459,56 461,55 466,56 469,55 472,56 475,55 482,54 488,53 490,54' },
  { title: 'Wasser kalt', max: '50.0', now: '41.1 °C', min: '20.0', color: RED, gap: 'gap-high', smooth: true,
    data: '194,110 208,112 242,116 296,116 305,111 315,108 335,99 355,91 375,83 395,75 415,68 435,62 455,55 474,48 494,42' },
  { title: 'Wasser warm', max: '50.0', now: '44.2 °C', min: '20.0', color: RED, gap: 'gap-high', smooth: true, warm: true,
    data: '194,107 205,108 214,110 225,111 234,112 237,111 266,113 277,114 288,114 290,112 294,108 306,103 311,100 335,89 353,81 390,65 412,57 432,49 451,42 470,35 482,31 494,28' }
];

function points(g) {
  const pts = g.data.split(' ').map(s => s.split(',').map(Number));
  if (!g.smooth) return pts;
  const out = [];
  for (let x = 194; x < 494; x += 3) {
    const i = pts.findIndex(q => q[0] > x);
    const [a, b] = [pts[i - 1], pts[i]];
    out.push([x, Math.round(a[1] + (b[1] - a[1]) * (x - a[0]) / (b[0] - a[0]))]);
  }
  return out;
}

function gridLines(first = 13) {
  let d = '';
  for (let k = 0; k < 24; k++) {
    const x = first + 20 * k;
    d += `M${x > 200 ? x + 1 : x} 0V140`;
  }
  for (let y = 19; y < 141; y += 20) d += `M0 ${y}H495`;
  return d;
}

graphs.forEach(g => {
  const pts = points(g);
  const start = pts[0][0];
  const line = `M${start} ${pts[0][1]}` + pts.slice(1).map(([x, y]) => `H${x}V${y}`).join('') + 'H495';
  const x0 = g.wide ? 0 : g.warm ? 8 : 11;
  const el = document.createElement('section');
  el.className = `graph ${g.wide ? 'graph-wide' : ''} ${g.clipped ? 'clipped' : ''}`;
  el.innerHTML = `
    <header class="graph-title">${use('app', 'app-icon')}<h2>${g.title}</h2><button class="close" aria-label="Schließen">${use('x')}</button></header>
    <div class="graph-body">
      <svg class="plot" viewBox="${x0} 0 ${495 - x0} 139" preserveAspectRatio="none" role="img" aria-label="${g.title}">
        <path d="${line}V140H${start}Z" fill="${g.color[1]}"/>
        <path class="grid-lines" d="${gridLines(g.grid)}"/>
        <path class="trace" d="${line}" stroke="${g.color[0]}"/>
      </svg>
      <div class="side">
        <input class="field" aria-label="Maximum" value="${g.max}">
        <div class="swatches"><button class="swatch" aria-label="Linienfarbe" style="background:${g.color[0]}"></button><button class="swatch swatch-back" aria-label="Hintergrund"></button><button class="swatch swatch-grid" aria-label="Gitter"></button></div>
        <input class="field" aria-label="Aktuell" value="${g.now}" readonly>
        <div class="actions"><button class="action action-fit">Auto Fit</button><button class="action action-reset">Reset</button></div>
        <input class="field" aria-label="Minimum" value="${g.min}">
      </div>
    </div>
    <div class="gap ${g.gap}"></div>`;
  document.getElementById(g.warm ? 'warm' : 'graphs').append(el);
});
```
